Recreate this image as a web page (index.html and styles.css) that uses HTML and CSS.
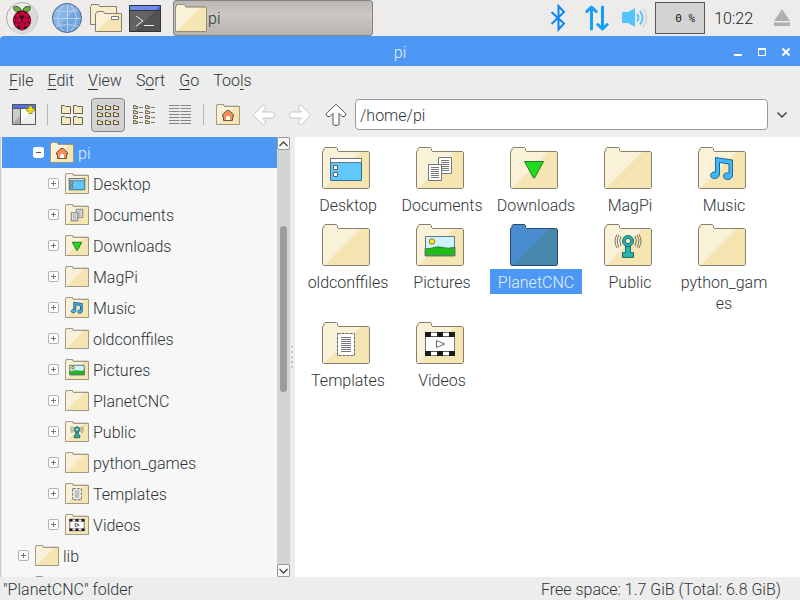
FILE: index.html
```html
<!DOCTYPE html>
<html lang="en">
<head>
<meta charset="utf-8">
<title>pi</title>
<link rel="stylesheet" href="styles.css">
</head>
<body>
<svg class="defs" aria-hidden="true">
  <defs>
    <symbol id="folder" viewBox="0 0 48 42">
      <path fill="#f5e5b3" d="M.5 40.500V4.500L2 3.500V1.500L3 .5H14.500L15.500 1.500V3.500L16.500 4.500H46.500L47.500 5.500V40.500L46.500 41.500H1.500z"/>
      <path fill="#f9f1d8" d="M.5 40.500V4.500L2 3.500V1.500L3 .5H14.500L15.500 1.500V3.500L16.500 4.500H39L2 41.500z"/>
      <path class="line" fill="none" stroke="#857f6d" d="M.5 40.500V4.500L2 3.500V1.500L3 .5H14.500L15.500 1.500V3.500L16.500 4.500H46.500L47.500 5.500V40.500L46.500 41.500H1.500z"/>
    </symbol>
    <symbol id="folder-selected" viewBox="0 0 48 42">
      <path fill="#4887ad" d="M.5 40.500V4.500L2 3.500V1.500L3 .5H14.500L15.500 1.500V3.500L16.500 4.500H46.500L47.500 5.500V40.500L46.500 41.500H1.500z"/>
      <path fill="#498dd0" d="M.5 40.500V4.500L2 3.500V1.500L3 .5H14.500L15.500 1.500V3.500L16.500 4.500H39L2 41.500z"/>
      <path class="line" fill="none" stroke="#27496c" d="M.5 40.500V4.500L2 3.500V1.500L3 .5H14.500L15.500 1.500V3.500L16.500 4.500H46.500L47.500 5.500V40.500L46.500 41.500H1.500z"/>
    </symbol>
    <symbol id="home" viewBox="0 0 48 42">
      <use href="#folder"/>
      <path class="line" fill="#f98f57" stroke="#6b5a4c" d="M22 13H26L35 21V25H33V33H15V25H13V21z"/>
      <path fill="#fff" d="M20 32V26Q24 21 28 26V32z"/>
    </symbol>
    <symbol id="desktop" viewBox="0 0 48 42">
      <use href="#folder"/>
      <rect class="line" x="8.500" y="11.500" width="31" height="22" fill="#60c8fc" stroke="#31708f"/>
      <path fill="#fff" d="M9 12H39V15H9z"/>
      <path class="line" fill="none" stroke="#6b7478" d="M8.500 15.500V11.500H39.500V15.500z"/>
      <path class="line" fill="#fff" stroke="#6b5f55" d="M11.500 18.500H15.500V22.500H11.500zM11.500 25.500H15.500V29.500H11.500z"/>
    </symbol>
    <symbol id="documents" viewBox="0 0 48 42">
      <use href="#folder"/>
      <rect class="line" x="22.500" y="10.500" width="13" height="16" fill="#fff" stroke="#777"/>
      <path class="fine" stroke="#777" d="M25 13.500H33M25 15.500H33M25 17.500H33M25 19.500H33M25 21.500H33M25 23.500H33"/>
      <rect class="line" x="12.500" y="17.500" width="13" height="16" fill="#fff" stroke="#777"/>
      <path class="fine" stroke="#777" d="M15 20.500H23M15 22.500H23M15 24.500H23M15 26.500H23M15 28.500H23M15 30.500H23"/>
    </symbol>
    <symbol id="downloads" viewBox="0 0 48 42">
      <use href="#folder"/>
      <path class="line" fill="#22dc22" stroke="#247a20" stroke-linejoin="round" d="M14.500 14.500H33.500L24.500 31H23.500z"/>
    </symbol>
    <symbol id="music" viewBox="0 0 48 42">
      <use href="#folder"/>
      <path class="line" fill="#3db7ff" stroke="#2a6687" stroke-linejoin="round" d="M17.500 10.500L34.500 13V28C34.500 31 32 32.500 29.500 32.500C27 32.500 25.500 31 25.500 29C25.500 26.500 28 25.500 31 26V17L21.500 15.500V27C21.500 30 19 31.500 16.500 31.500C14 31.500 12.500 30 12.500 28.500C12.500 26 15 24.500 17.500 25z"/>
    </symbol>
    <symbol id="pictures" viewBox="0 0 48 42">
      <use href="#folder"/>
      <path fill="#d0f1ff" d="M9 12H39V32H9z"/>
      <path fill="#1fbc1a" stroke="#1c6b1a" stroke-width=".7" d="M9 24.500Q14 25 18 23.500T27 23.500T39 23V32H9z"/>
      <circle class="line" cx="16" cy="17.500" r="2.700" fill="#ffee1d" stroke="#8a7c23"/>
      <rect class="line" x="9.500" y="12.500" width="29" height="19" fill="none" stroke="#66757b"/>
    </symbol>
    <symbol id="public" viewBox="0 0 48 42">
      <use href="#folder"/>
      <path class="line" fill="#20b6ae" stroke="#286d65" d="M21.500 22H26.500V28.500H29.500V33.500H18.500V28.500H21.500z"/>
      <circle class="line" cx="24" cy="17" r="5.500" fill="#20b6ae" stroke="#286d65"/>
      <circle class="fine" cx="24" cy="17" r="2.700" fill="#f8edcf" stroke="#286d65"/>
      <path class="fine" fill="none" stroke="#777160" d="M17 12Q14.500 17 17 22M15 11Q11.500 17 15 23.500M13 10.500Q9 17 13 24M31 12Q33.500 17 31 22M33 11Q36.500 17 33 23.500M35 10.500Q39 17 35 24"/>
    </symbol>
    <symbol id="templates" viewBox="0 0 48 42">
      <use href="#folder"/>
      <rect class="line" x="15.500" y="11.500" width="17" height="22" fill="#fff" stroke="#666" stroke-dasharray="3 1"/>
      <path class="fine" stroke="#777" d="M19 15.500H29M19 17.500H29M19 19.500H29M19 21.500H29M19 23.500H29M19 25.500H29M19 27.500H29M19 29.500H29"/>
    </symbol>
    <symbol id="videos" viewBox="0 0 48 42">
      <use href="#folder"/>
      <rect class="line" x="9.500" y="10.500" width="29" height="23" fill="#fff" stroke="#777"/>
      <path class="fine" stroke="#555" d="M9 14.500H39M9 29.500H39"/>
      <path fill="#1c1c1c" d="M9 10h6v5H9zM21 10h6v5h-6zM33 10h6v5h-6zM9 29h6v5H9zM21 29h6v5h-6zM33 29h6v5h-6z"/>
      <path class="line" fill="#fff" stroke="#666" d="M20.500 18.500L28.500 22L20.500 25.500z"/>
    </symbol>
    <symbol id="arrow" viewBox="0 0 22 22">
      <path fill="#fff" stroke-linejoin="round" d="M.8 10.500L9.500 1.300H11.500L12.500 3V5L9.500 8H20L21.300 9V13L20 14H9.500L12.500 17V19L11.500 20.700H9.500L.8 11.500z"/>
    </symbol>
  </defs>
</svg>

<header class="panel">
  <button class="launcher" aria-label="Menu">
    <svg width="32" height="32" viewBox="0 0 32 32">
      <circle cx="16" cy="16" r="15.500" fill="#eeeeed" stroke="#aaa"/>
      <path fill="#dadada" d="M27 5A15 15 0 0 1 5 27z"/>
      <path fill="#6cb33f" stroke="#26331c" stroke-width=".8" d="M15.500 10C10 11 7.500 8.500 7.500 5C10 3.500 15 4.500 15.500 10zM16.500 10C22 11 24.500 8.500 24.500 5C22 3.500 17 4.500 16.500 10z"/>
      <path fill="#32131b" d="M16 8.500C21 8.500 25 13 25 18.500C25 23 21 28 16 28.500C11 28 7 23 7 18.500C7 13 11 8.500 16 8.500z"/>
      <g fill="#c7053d"><ellipse cx="16" cy="11.500" rx="3" ry="2"/><ellipse cx="11.300" cy="13.500" rx="2.600" ry="2.300"/><ellipse cx="20.700" cy="13.500" rx="2.600" ry="2.300"/><circle cx="12.600" cy="18.200" r="2.800"/><circle cx="19.400" cy="18.200" r="2.800"/><ellipse cx="8.300" cy="18.300" rx="1.500" ry="2.500"/><ellipse cx="23.700" cy="18.300" rx="1.500" ry="2.500"/><circle cx="16" cy="23" r="2.800"/><ellipse cx="10.700" cy="23" rx="2.200" ry="2.300"/><ellipse cx="21.300" cy="23" rx="2.200" ry="2.300"/><ellipse cx="16" cy="27" rx="2.400" ry="1.200"/></g>
    </svg>
  </button>
  <button class="launcher globe" aria-label="Web Browser">
    <svg width="32" height="32" viewBox="0 0 32 32">
      <circle cx="16" cy="16" r="14.500" fill="#73a5dd"/>
      <path fill="#8bb5e7" d="M26.500 6A14.500 14.500 0 1 0 6 26.500z"/>
      <path fill="none" stroke="#b8d3f2" d="M2 16.500H30M16.500 2V30M4.500 8.500Q16 11 27.500 8.500M4.500 24.500Q16 21 27.500 24.500M13 2Q0 16 13 30M19 2Q32 16 19 30"/>
      <circle cx="16" cy="16" r="14.500" fill="none" stroke="#4b6a8f"/>
    </svg>
  </button>
  <button class="launcher" aria-label="File Manager">
    <svg width="32" height="32" viewBox="0 0 32 32">
      <path fill="#f8eecb" stroke="#857f6d" d="M.5 22.500V4.500L1.500 3.500V2.500H8.500L9.500 4.500H26.500V22.500z"/>
      <path fill="#f5e5b3" d="M5.500 29.500V11.500L7 10.500V9.500H13.500L14.500 11.500H31.500V29.500z"/>
      <path fill="#f9f1d8" d="M5.500 29.500V11.500L7 10.500V9.500H13.500L14.500 11.500H25L6 29.500z"/>
      <path fill="none" stroke="#857f6d" d="M5.500 29.500V11.500L7 10.500V9.500H13.500L14.500 11.500H31.500V29.500z"/>
      <path fill="#fff" stroke="#777" d="M21.500 14.500H28.500V17.500H21.500z"/>
    </svg>
  </button>
  <button class="launcher terminal" aria-label="Terminal">
    <svg width="32" height="27" viewBox="0 0 32 27">
      <path fill="#525252" d="M0 0H32V27H0z"/><path fill="#636363" d="M0 5H27L5 27H0z"/>
      <path fill="#4866df" d="M0 0H32V5H0z"/><path fill="#6c8af4" d="M0 0H31L27 5H0z"/>
      <path fill="none" stroke="#333" d="M.5 .5H31.500V26.500H.5zM0 5.500H32"/>
      <path fill="none" stroke="#eee" d="M7 11L14 16L7 21M15 20.500H25"/>
    </svg>
  </button>
  <button class="task"><svg width="32" height="28" viewBox="0 0 48 42"><use href="#folder"/></svg>pi</button>
  <div class="tray">
    <svg width="16" height="28" viewBox="0 0 16 28"><path fill="none" stroke="#0b87f5" stroke-width="2" d="M1.500 8L14 19.500L8.500 25.500V2L14 8L1.500 20"/></svg>
    <svg width="24" height="26" viewBox="0 0 24 26"><path fill="none" stroke="#12a0fa" stroke-width="3" stroke-linecap="round" stroke-linejoin="round" d="M6.500 24V3M1.800 6.500L6.500 2L11.200 6.500M17.500 2V23M12.800 19.500L17.500 24L22.200 19.500"/></svg>
    <svg width="28" height="22" viewBox="0 0 28 22"><path fill="#56c4fc" d="M0 6Q0 5 1 5H6L13 1V20L6 16H1Q0 16 0 15z"/><path fill="none" stroke="#56c4fc" stroke-width="2" d="M15 7Q18 10.500 15 14.500M18 4Q23 10.500 18 17.500"/><path fill="none" stroke="#dadada" stroke-width="2" d="M21 1.500Q28 10.500 21 20"/></svg>
    <span class="cpu">0 %</span>
    <time>10:22</time>
    <button class="eject" aria-label="Eject"><svg width="16" height="18" viewBox="0 0 16 18"><path fill="#b0afae" d="M8 0L16 12H0zM0 13.500H16V17H0z"/></svg></button>
  </div>
</header>

<main class="window">
  <div class="titlebar">
    <h1>pi</h1>
    <div class="controls">
      <button aria-label="Minimize"><svg width="10" height="10" viewBox="0 0 10 10"><path fill="#fff" d="M1 7H9V9H1z"/></svg></button>
      <button aria-label="Maximize"><svg width="10" height="10" viewBox="0 0 10 10"><path fill="#fff" fill-rule="evenodd" d="M1 1H9V9H1zM2 3V8H8V3z"/></svg></button>
      <button aria-label="Close"><svg width="10" height="10" viewBox="0 0 10 10"><path stroke="#fff" stroke-width="2" d="M1.500 1.500L8.500 8.500M8.500 1.500L1.500 8.500"/></svg></button>
    </div>
  </div>
  <nav class="menubar">
    <button><u>F</u>ile</button><button><u>E</u>dit</button><button><u>V</u>iew</button><button>S<u>o</u>rt</button><button><u>G</u>o</button><button>Too<u>l</u>s</button>
  </nav>
  <div class="toolbar">
    <button class="tool" aria-label="New Window"><svg width="24" height="21" viewBox="0 0 24 21"><path fill="#eee" d="M0 0H24V20H0z"/><path fill="#aaa" d="M0 5H8V20H0z"/><path fill="#ccc" d="M0 5H8V12L0 20z"/><path fill="#fafafa" d="M9 5H22L9 18z"/><path fill="#5474e6" d="M0 0H24V5H0z"/><path fill="none" stroke="#555" d="M.5 .5H23.500V20.500H.5zM0 4.500H24M8.500 5V20"/><path fill="#ffeb00" stroke="#8d8126" stroke-width=".8" d="M17 2H20V4.500H22.500V7H20V9.500H17V7H14.500V4.500H17z"/></svg></button>
    <span class="sep"></span>
    <button class="tool" aria-label="Icon View"><svg width="24" height="20" viewBox="0 0 24 20"><g fill="#f7e9bf" stroke="#69634f"><path id="c" d="M1.500 8.500V.5H4.500L5.500 1.500H10.500V8.500z"/><use href="#c" x="12"/><use href="#c" y="11"/><use href="#c" x="12" y="11"/></g></svg></button>
    <button class="tool active" aria-label="Thumbnail View" aria-pressed="true"><svg width="22" height="20" viewBox="0 0 22 20"><g fill="#f5e5b3" stroke="#514c3d"><path id="s" d="M.5 4.500V.5H2.500L3.500 1.500H5.500V4.500z"/><use href="#s" x="8"/><use href="#s" x="16"/><use href="#s" y="7"/><use href="#s" x="8" y="7"/><use href="#s" x="16" y="7"/><use href="#s" y="15"/><use href="#s" x="8" y="15"/><use href="#s" x="16" y="15"/></g></svg></button>
    <button class="tool" aria-label="Compact View"><svg width="22" height="20" viewBox="0 0 22 20"><g fill="#f5e5b3" stroke="#69634f"><path id="t" d="M.5 3.500V.5H2.500V1.500H4.500V3.500z"/><use href="#t" y="5"/><use href="#t" y="10"/><use href="#t" y="15"/><use href="#t" x="12"/><use href="#t" x="12" y="5"/><use href="#t" x="12" y="10"/><use href="#t" x="12" y="15"/></g><path stroke="#777" stroke-dasharray="4 8" d="M6 2.500H22M6 7.500H22M6 12.500H22M6 17.500H22"/></svg></button>
    <button class="tool" aria-label="Detailed List View"><svg width="22" height="20" viewBox="0 0 22 20"><path stroke="#858585" stroke-dasharray="10.500 1" d="M0 .5H22M0 3.500H22M0 6.500H22M0 9.500H22M0 12.500H22M0 15.500H22M0 18.500H22"/></svg></button>
    <span class="sep"></span>
    <button class="tool" aria-label="Home"><svg width="24" height="21"><use href="#home"/></svg></button>
    <button class="tool arrow off" aria-label="Back" disabled><svg width="22" height="22"><use href="#arrow"/></svg></button>
    <button class="tool arrow off forward" aria-label="Forward" disabled><svg width="22" height="22"><use href="#arrow"/></svg></button>
    <button class="tool arrow up" aria-label="Up"><svg width="22" height="22"><use href="#arrow"/></svg></button>
    <input class="path" type="text" value="/home/pi" aria-label="Location">
    <button class="drop" aria-label="History"><svg width="12" height="8" viewBox="0 0 12 8"><path fill="none" stroke="#444" stroke-width="1.500" d="M1.500 1.500L6 6L10.500 1.500"/></svg></button>
  </div>

  <div class="content">
    <ul class="tree">
      <li class="row root selected"><button class="exp minus" aria-label="Collapse"></button><svg><use href="#home"/></svg><span>pi</span></li>
      <li class="row"><button class="exp" aria-label="Expand"></button><svg><use href="#desktop"/></svg><span>Desktop</span></li>
      <li class="row"><button class="exp" aria-label="Expand"></button><svg><use href="#documents"/></svg><span>Documents</span></li>
      <li class="row"><button class="exp" aria-label="Expand"></button><svg><use href="#downloads"/></svg><span>Downloads</span></li>
      <li class="row"><button class="exp" aria-label="Expand"></button><svg><use href="#folder"/></svg><span>MagPi</span></li>
      <li class="row"><button class="exp" aria-label="Expand"></button><svg><use href="#music"/></svg><span>Music</span></li>
      <li class="row"><button class="exp" aria-label="Expand"></button><svg><use href="#folder"/></svg><span>oldconffiles</span></li>
      <li class="row"><button class="exp" aria-label="Expand"></button><svg><use href="#pictures"/></svg><span>Pictures</span></li>
      <li class="row"><button class="exp" aria-label="Expand"></button><svg><use href="#folder"/></svg><span>PlanetCNC</span></li>
      <li class="row"><button class="exp" aria-label="Expand"></button><svg><use href="#public"/></svg><span>Public</span></li>
      <li class="row"><button class="exp" aria-label="Expand"></button><svg><use href="#folder"/></svg><span>python_games</span></li>
      <li class="row"><button class="exp" aria-label="Expand"></button><svg><use href="#templates"/></svg><span>Templates</span></li>
      <li class="row"><button class="exp" aria-label="Expand"></button><svg><use href="#videos"/></svg><span>Videos</span></li>
      <li class="row top"><button class="exp" aria-label="Expand"></button><svg><use href="#folder"/></svg><span>lib</span></li>
      <li class="row top"><button class="exp" aria-label="Expand"></button><svg><use href="#folder"/></svg></li>
    </ul>
    <div class="scroll">
      <button aria-label="Scroll up"><svg width="9" height="6" viewBox="0 0 9 6"><path fill="none" stroke="#444" stroke-width="1.300" d="M.5 5L4.500 1L8.500 5"/></svg></button>
      <div class="track"><div class="thumb"></div></div>
      <button aria-label="Scroll down"><svg width="9" height="6" viewBox="0 0 9 6"><path fill="none" stroke="#444" stroke-width="1.300" d="M.5 1L4.500 5L8.500 1"/></svg></button>
    </div>
    <div class="splitter"><i></i><i></i><i></i><i></i><i></i></div>
    <div class="icons">
      <button class="item"><svg><use href="#desktop"/></svg><span>Desktop</span></button>
      <button class="item"><svg><use href="#documents"/></svg><span>Documents</span></button>
      <button class="item"><svg><use href="#downloads"/></svg><span>Downloads</span></button>
      <button class="item"><svg><use href="#folder"/></svg><span>MagPi</span></button>
      <button class="item"><svg><use href="#music"/></svg><span>Music</span></button>
      <button class="item"><svg><use href="#folder"/></svg><span>oldconffiles</span></button>
      <button class="item"><svg><use href="#pictures"/></svg><span>Pictures</span></button>
      <button class="item selected"><svg><use href="#folder-selected"/></svg><span>PlanetCNC</span></button>
      <button class="item"><svg><use href="#public"/></svg><span>Public</span></button>
      <button class="item"><svg><use href="#folder"/></svg><span>python_games</span></button>
      <button class="item"><svg><use href="#templates"/></svg><span>Templates</span></button>
      <button class="item"><svg><use href="#videos"/></svg><span>Videos</span></button>
    </div>
  </div>
  <footer class="status"><span>"PlanetCNC" folder</span><span>Free space: 1.7 GiB (Total: 6.8 GiB)</span></footer>
</main>
</body>
</html>
```
FILE: styles.css
```css
* { box-sizing: border-box; }
body {
  margin: 0;
  height: 100vh;
  display: flex;
  flex-direction: column;
  overflow: hidden;
  background: #edeceb;
  color: #2e3436;
  font: 300 16px/21px Roboto, sans-serif;
}
button {
  padding: 0;
  border: 0;
  background: none;
  color: inherit;
  font: inherit;
}
svg { display: block; flex: none; }
.defs { position: absolute; width: 0; height: 0; }
.line { vector-effect: non-scaling-stroke; }
.line, .fine { stroke-width: 1px; }

.panel {
  flex: none;
  height: 36px;
  display: flex;
  align-items: center;
  padding-left: 6px;
}
.launcher { margin-right: 7px; }
.launcher.globe { margin-left: 6px; }
.launcher.terminal { margin-right: 12px; }
.task {
  width: 200px;
  height: 36px;
  display: flex;
  align-items: center;
  gap: 1px;
  padding-left: 1px;
  border: 1px solid #858381;
  border-radius: 3px;
  background: linear-gradient(#bab7b4, #cac7c4 40%, #b8b4b1);
}
.tray {
  margin-left: auto;
  padding-right: 10px;
  display: flex;
  align-items: center;
}
.tray svg { margin-right: 19px; }
.tray svg + svg { margin-right: 13px; }
.tray svg + svg + svg { margin-right: 5px; }
.cpu {
  width: 50px;
  height: 32px;
  padding-right: 9px;
  border: 1px solid #555;
  background: #d3d3d3;
  color: #111;
  font: 400 11px/32px "DejaVu Sans Mono", monospace;
  text-align: right;
}
.tray time { margin: 0 21px 0 9px; color: #222; }
.tray .eject svg { margin: 0; }

.window { flex: 1; min-height: 0; display: flex; flex-direction: column; background: #ededed; }
.titlebar {
  flex: none;
  height: 30px;
  display: grid;
  grid-template-columns: 1fr auto 1fr;
  align-items: center;
  background: #4d98f5;
  color: #e4effd;
  border-top-left-radius: 4px;
}
.titlebar h1 { grid-column: 2; margin: 0; padding-top: 2px; font: inherit; }
.controls { display: flex; justify-content: flex-end; gap: 14px; padding: 2px 9px 0 0; }

.menubar { flex: none; height: 29px; display: flex; align-items: center; gap: 14px; padding-left: 9px; }
.menubar u { text-underline-offset: 3px; text-decoration-thickness: 1px; }
.toolbar { flex: none; height: 42px; display: flex; align-items: center; padding: 0 12px 3px 6px; }
.tool {
  width: 34px;
  height: 34px;
  margin: 0 1px;
  display: grid;
  place-items: center;
  flex: none;
}
.tool.active { border: 1px solid #858585; border-radius: 4px; background: #d2d2d2; }
.arrow { stroke: #555; }
.arrow.off { stroke: #c4c4c4; opacity: .9; }
.forward svg { transform: rotate(180deg); }
.up svg { transform: rotate(90deg); }
.sep { width: 12px; height: 21px; flex: none; background: linear-gradient(#b5b5b5, #b5b5b5) 5px 0 / 1px 100% no-repeat; }
.path {
  flex: 1;
  min-width: 0;
  height: 31px;
  margin-left: 1px;
  padding: 2px 4px 0;
  border: 1px solid #999;
  border-radius: 4px;
  background: #fff;
  color: inherit;
  font: inherit;
}
.drop { margin-left: 8px; padding: 4px 0; width: 12px; }

.content { flex: 1; min-height: 0; display: flex; border-left: 1px solid #ccc; padding-left: 1px; }
.tree { width: 275px; margin: 0; padding: 0; list-style: none; overflow: hidden; background: #f7f7f7; }
.row { height: 31px; display: flex; align-items: center; padding-left: 46px; }
.row svg { width: 24px; height: 21px; margin: 0 4px 0 6px; }
.row span { padding-top: 2px; }
.row.root { padding-left: 31px; }
.row.top { padding-left: 16px; }
.row.selected { background: #4d98f5; color: #e4effd; }
.exp {
  width: 11px;
  height: 11px;
  flex: none;
  border: 1px solid #b4b4b4;
  border-radius: 2px;
  background:
    linear-gradient(#777, #777) center / 5px 1px no-repeat,
    linear-gradient(#777, #777) center / 1px 5px no-repeat,
    #fff;
}
.exp.minus { border-color: #fff; background: linear-gradient(#555, #555) center / 5px 1px no-repeat, #fff; }
.scroll { width: 13px; display: flex; flex-direction: column; background: #d4d4d4; }
.scroll button {
  height: 13px;
  display: grid;
  place-items: center;
  border: 1px solid #999;
  border-radius: 2px;
  background: #f8f8f8;
}
.track { flex: 1; display: flex; flex-direction: column; align-items: center; }
.track::before { content: ""; flex: 76; }
.track::after { content: ""; flex: 172; }
.thumb { flex: 166; width: 7px; border-radius: 4px; background: #9c9c9c; }
.splitter { width: 5px; display: flex; flex-direction: column; justify-content: center; align-items: flex-start; gap: 3px; padding-left: 1px; }
.splitter i { width: 2px; height: 2px; background: #c4c4c4; }
.icons {
  flex: 1;
  display: grid;
  grid-template-columns: repeat(auto-fill, 92px);
  gap: 7px 2px;
  align-content: start;
  padding: 10px 7px;
  background: #fff;
}
.item { display: flex; flex-direction: column; align-items: center; gap: 3px; }
.item svg { width: 48px; height: 42px; margin-right: 4px; }
.item span { width: 100%; padding: 3px 0 1px; overflow-wrap: anywhere; }
.item.selected span { background: #4d98f5; color: #e4effd; }
.status { flex: none; height: 23px; display: flex; justify-content: space-between; padding: 2px 19px 0 3px; }
```
